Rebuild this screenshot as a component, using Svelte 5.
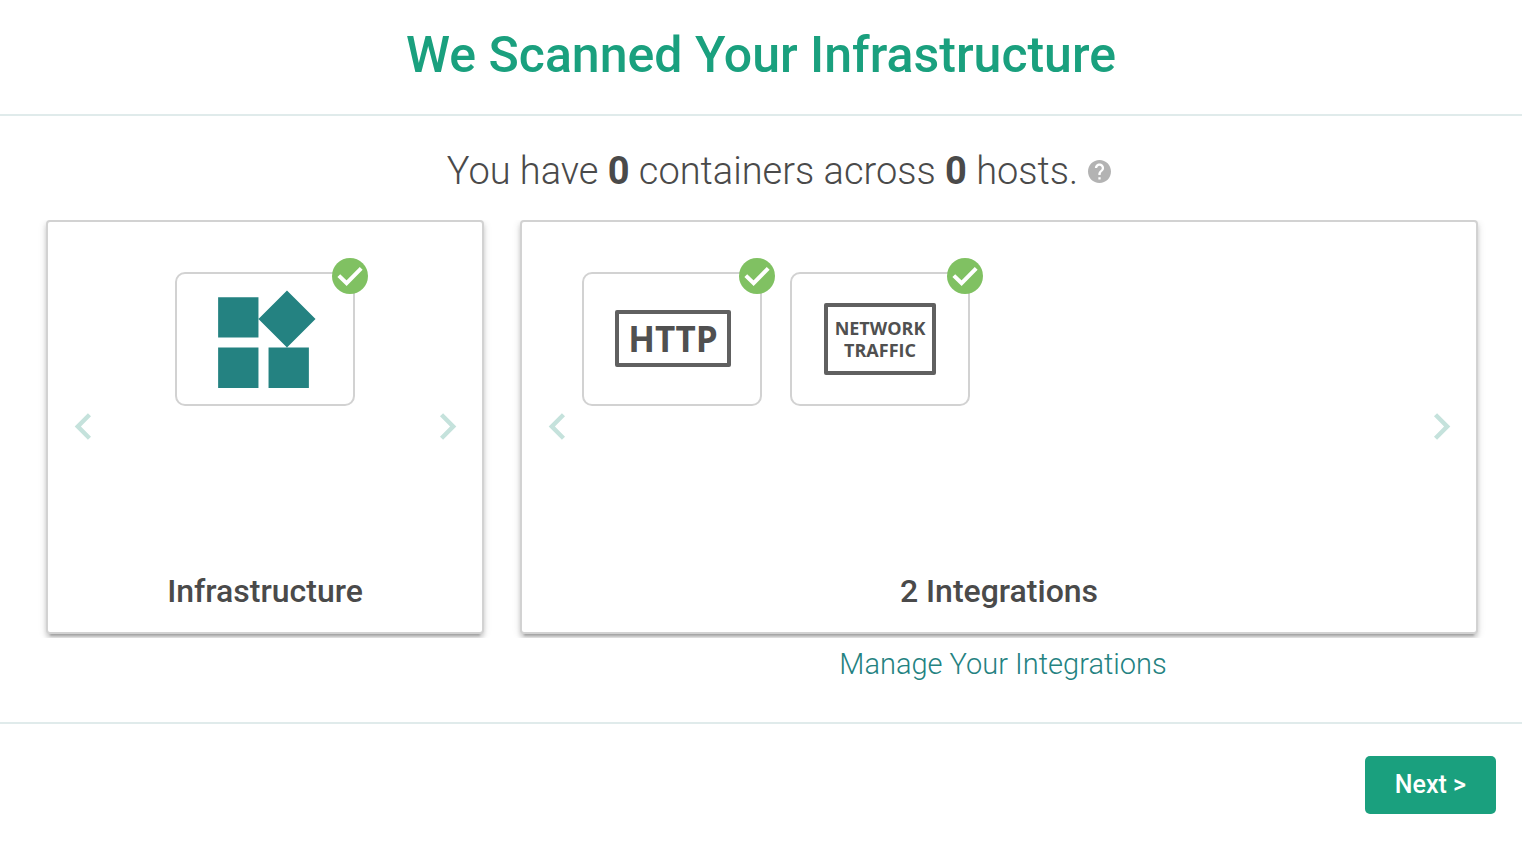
<script>
  const panels = [
    { id: 'infra', title: 'Infrastructure', tiles: [{ kind: 'widgets', label: 'Infrastructure' }] },
    {
      id: 'integrations',
      title: '2 Integrations',
      tiles: [
        { kind: 'http', lines: ['HTTP'] },
        { kind: 'network', lines: ['NETWORK', 'TRAFFIC'] }
      ]
    }
  ];
</script>

{#snippet chevron(d)}
  <svg viewBox="0 0 24 24" aria-hidden="true"><path {d} /></svg>
{/snippet}

<div class="wizard">
  <header>
    <h1>We Scanned Your Infrastructure</h1>
  </header>

  <main>
    <p class="summary">
      <span>You have <b>0</b> containers across <b>0</b> hosts.</span>
      <button class="help" aria-label="Help">
        <svg viewBox="2 2 20 20" aria-hidden="true">
          <path d="M12 2C6.48 2 2 6.48 2 12s4.48 10 10 10 10-4.48 10-10S17.52 2 12 2zm1 17h-2v-2h2v2zm2.07-7.75l-.9.92C13.45 12.9 13 13.5 13 15h-2v-.5c0-1.1.45-2.1 1.17-2.83l1.24-1.26c.37-.36.59-.86.59-1.41 0-1.1-.9-2-2-2s-2 .9-2 2H8c0-2.21 1.79-4 4-4s4 1.79 4 4c0 .88-.36 1.68-.93 2.25z" />
        </svg>
      </button>
    </p>

    <div class="panels">
      {#each panels as panel (panel.id)}
        <section class="panel {panel.id}">
          <div class="carousel">
            <button class="arrow" aria-label="Previous">
              {@render chevron('M15.41 7.41L14 6l-6 6 6 6 1.41-1.41L10.83 12z')}
            </button>
            <ul>
              {#each panel.tiles as tile (tile.kind)}
                <li class="tile">
                  {#if tile.kind === 'widgets'}
                    <svg class="widgets" viewBox="0 0 24 24" role="img" aria-label={tile.label}>
                      <path d="M13 13v8h8v-8h-8zM3 21h8v-8H3v8zM3 3v8h8V3H3zm13.66-1.31L11 7.34 16.66 13l5.66-5.66-5.66-5.65z" />
                    </svg>
                  {:else}
                    <div class="logo {tile.kind}">
                      {#each tile.lines as line}
                        <span>{line}</span>
                      {/each}
                    </div>
                  {/if}
                  <svg class="badge" viewBox="0 0 36 36" aria-hidden="true">
                    <circle cx="18" cy="18" r="18" />
                    <path d="M6.8 17.6L14.6 25.2L29.2 10.4" />
                  </svg>
                </li>
              {/each}
            </ul>
            <button class="arrow" aria-label="Next items">
              {@render chevron('M10 6L8.59 7.41 13.17 12l-4.58 4.59L10 18l6-6z')}
            </button>
          </div>
          <h2>{panel.title}</h2>
        </section>
      {/each}
    </div>

    <div class="manage"><a href="#integrations">Manage Your Integrations</a></div>
  </main>

  <footer>
    <button class="next">Next &gt;</button>
  </footer>
</div>

<style>
  :global(body) {
    margin: 0;
    background: #fff;
  }

  .wizard {
    font-family: Roboto, sans-serif;
    color: #4a4a4a;
  }

  button {
    font: inherit;
    padding: 0;
    border: 0;
    background: none;
    cursor: pointer;
  }

  svg {
    display: block;
  }

  header {
    padding: 24px 0 28px;
    border-bottom: 2px solid #e0ebeb;
    text-align: center;
  }

  h1 {
    margin: 0;
    font-size: 50px;
    line-height: 62px;
    font-weight: 500;
    color: #1aa07e;
  }

  .summary {
    display: flex;
    justify-content: center;
    align-items: center;
    gap: 10px;
    margin: 0;
    padding: 31px 0 25px 36px;
    font-size: 38px;
    line-height: 48px;
    font-weight: 300;
  }

  .summary b {
    font-weight: 700;
  }

  .help svg {
    width: 23px;
    height: 23px;
    fill: #b3b3b3;
  }

  .panels {
    display: grid;
    grid-template-columns: 438fr 958fr;
    gap: 36px;
    padding: 0 44px 4px 46px;
    overflow: hidden;
  }

  .panel {
    box-sizing: border-box;
    min-width: 0;
    min-height: 414px;
    display: flex;
    flex-direction: column;
    border: 2px solid #d2d2d2;
    border-radius: 4px;
    background: #fff;
    box-shadow:
      0 6px 2px -4px rgba(0, 0, 0, 0.2),
      0 4px 4px rgba(0, 0, 0, 0.14),
      0 2px 8px rgba(0, 0, 0, 0.12);
  }

  .carousel {
    flex: 1;
    display: flex;
    align-items: stretch;
    padding: 50px 10px 0;
  }

  .arrow {
    display: flex;
    align-items: center;
    justify-content: center;
    width: 50px;
    padding-top: 11px;
    flex: none;
  }

  .arrow svg {
    flex: none;
    width: 53px;
    height: 53px;
    fill: #c5e2dc;
  }

  ul {
    flex: 1;
    display: flex;
    gap: 28px;
    margin: 0;
    padding: 0;
    list-style: none;
  }

  .infra ul {
    justify-content: center;
  }

  .tile {
    position: relative;
    box-sizing: border-box;
    width: 180px;
    height: 134px;
    display: flex;
    align-items: center;
    justify-content: center;
    border: 2px solid #d2d2d2;
    border-radius: 10px;
  }

  .widgets {
    width: 121px;
    height: 121px;
    margin: 6px 4px 0 0;
    fill: #248281;
  }

  .badge {
    position: absolute;
    top: -16px;
    right: -15px;
    width: 36px;
    height: 36px;
    fill: #80c162;
  }

  .badge path {
    fill: none;
    stroke: #fff;
    stroke-width: 4;
  }

  .logo {
    display: flex;
    flex-direction: column;
    align-items: center;
    border: 4px solid #606060;
    border-radius: 2px;
    color: #505050;
    font-family: 'Open Sans', sans-serif;
  }

  .http {
    margin: 0 0 2px 2px;
    padding: 0 9px;
    font-size: 35px;
    line-height: 49px;
    font-weight: 700;
  }

  .network {
    padding: 10px 7px;
    font-size: 18px;
    line-height: 22px;
    font-weight: 700;
  }

  h2 {
    margin: 0;
    padding-bottom: 19px;
    font-size: 32px;
    line-height: 44px;
    font-weight: 500;
    text-align: center;
  }

  .manage {
    display: flex;
    justify-content: center;
    padding: 6px 0 38px 484px;
    font-size: 29px;
    line-height: 40px;
    font-weight: 300;
  }

  .manage a {
    color: #248281;
    text-decoration: none;
  }

  footer {
    display: flex;
    justify-content: flex-end;
    padding: 32px 26px 28px;
    border-top: 2px solid #e0ebeb;
  }

  .next {
    padding: 0 30px;
    border-radius: 5px;
    background: #1aa07e;
    color: #fff;
    font-size: 25px;
    line-height: 58px;
    font-weight: 500;
  }
</style>
